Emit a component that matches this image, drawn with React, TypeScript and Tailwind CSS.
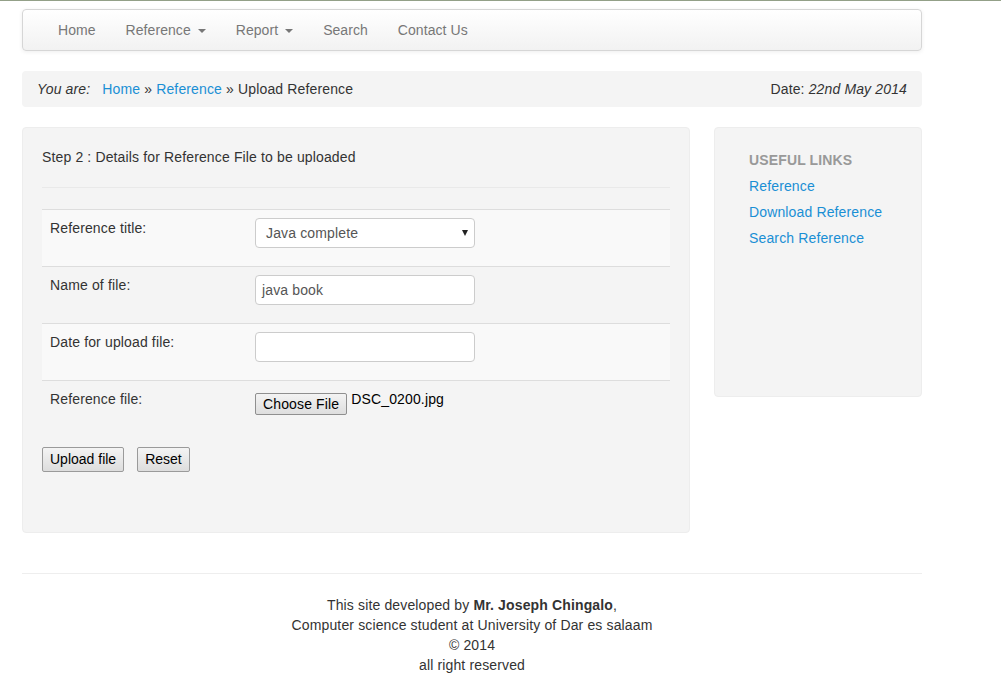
const linkBlue = "text-[#1a8fd4]";

function Caret() {
  return (
    <span className="ml-[7px] inline-block h-0 w-0 border-x-4 border-t-4 border-x-transparent border-t-[#777] align-middle" />
  );
}

function NavBar() {
  const items = [
    { label: "Home" },
    { label: "Reference", caret: true },
    { label: "Report", caret: true },
    { label: "Search" },
    { label: "Contact Us" },
  ];
  return (
    <nav className="mt-[8px] h-[42px] rounded-[4px] border border-[#d6d6d6] bg-gradient-to-b from-white to-[#f2f2f2] shadow-[0_1px_4px_rgba(0,0,0,0.07)]">
      <ul className="flex h-full items-center pl-[20px] tracking-[0.06px]">
        {items.map((it) => (
          <li key={it.label} className="px-[15px] text-[14px] text-[#777]">
            {it.label}
            {it.caret && <Caret />}
          </li>
        ))}
      </ul>
    </nav>
  );
}

function Breadcrumb() {
  return (
    <div className="mt-[20px] flex h-[36px] items-center justify-between rounded-[4px] bg-[#f4f4f4] px-[15px] text-[14px] text-[#333]">
      <div>
        <i>You are:</i>
        <span className={`ml-[12px] ${linkBlue}`}>Home</span> »{" "}
        <span className={linkBlue}>Reference</span> » Upload Reference
      </div>
      <div>
        Date: <i>22nd May 2014</i>
      </div>
    </div>
  );
}

function Row({
  label,
  striped,
  children,
}: {
  label: string;
  striped?: boolean;
  children: React.ReactNode;
}) {
  return (
    <div className={`flex h-[57px] border-t border-[#dddddd] ${striped ? "bg-[#f9f9f9]" : ""}`}>
      <div className="w-[213px] px-[8px] pt-[8px] leading-[20px]">{label}</div>
      <div className="pt-[8px]">{children}</div>
    </div>
  );
}

function TextInput({ value }: { value?: string }) {
  return (
    <div className="flex h-[30px] w-[220px] items-center rounded-[4px] border border-[#cccccc] bg-white px-[6px] text-[14px] text-[#555]">
      {value}
    </div>
  );
}

const btn =
  "h-[25px] rounded-[2px] border border-[#9a9a9a] bg-gradient-to-b from-[#f4f4f4] to-[#dddddd] px-[7px] text-[14px] tracking-normal text-black";

function UploadForm() {
  return (
    <section className="h-[406px] w-[668px] rounded-[4px] border border-[#ededed] bg-[#f4f4f4] px-[19px] pt-[19px] text-[14px] text-[#333]">
      <p className="leading-[20px]">Step 2 : Details for Reference File to be uploaded</p>
      <hr className="mt-[20px] border-t border-[#e9e9e9]" />
      <div className="mt-[21px]">
        <Row label="Reference title:" striped>
          <div className="flex h-[30px] w-[220px] items-center justify-between rounded-[4px] border border-[#cccccc] bg-white pl-[10px] pr-[6px] text-[14px] text-[#555]">
            <span>Java complete</span>
            <span className="h-0 w-0 border-x-[3.5px] border-t-[6px] border-x-transparent border-t-[#222]" />
          </div>
        </Row>
        <Row label="Name of file:">
          <TextInput value="java book" />
        </Row>
        <Row label="Date for upload file:" striped>
          <TextInput />
        </Row>
        <Row label="Reference file:">
          <div className="flex items-start">
            <span className="mt-[4px] rounded-[2px] border border-[#8f8f8f] bg-gradient-to-b from-[#f3f3f3] to-[#dedede] px-[7px] py-[1px] text-[14px] leading-[18px] text-black">
              Choose File
            </span>
            <span className="ml-[4px] leading-[20px] text-black">DSC_0200.jpg</span>
          </div>
        </Row>
      </div>
      <div className="mt-[10px] flex gap-[13px]">
        <button className={btn}>Upload file</button>
        <button className={btn}>Reset</button>
      </div>
    </section>
  );
}

function UsefulLinks() {
  return (
    <aside className="h-[270px] w-[208px] rounded-[4px] border border-[#ededed] bg-[#f4f4f4] pl-[34px] pt-[22px] text-[14px]">
      <h3 className="text-[14px] font-bold leading-[20px] text-[#999]">USEFUL LINKS</h3>
      <ul className="mt-[6px] flex flex-col gap-[6px]">
        <li className={`leading-[20px] ${linkBlue}`}>Reference</li>
        <li className={`leading-[20px] ${linkBlue}`}>Download Reference</li>
        <li className={`leading-[20px] ${linkBlue}`}>Search Reference</li>
      </ul>
    </aside>
  );
}

function Footer() {
  return (
    <footer className="mt-[40px]">
      <hr className="border-t border-[#eeeeee]" />
      <div className="mt-[21px] text-center text-[14px] leading-[20px] text-[#333]">
        <p>
          This site developed by <b>Mr. Joseph Chingalo</b>,
        </p>
        <p>Computer science student at University of Dar es salaam</p>
        <p>© 2014</p>
        <p>all right reserved</p>
      </div>
    </footer>
  );
}

export default function App() {
  return (
    <div className="min-h-[675px] border-t border-[#93a088] bg-white font-['Liberation_Sans',Arial,sans-serif] tracking-[0.14px]">
      <div className="ml-[22px] w-[900px]">
        <NavBar />
        <Breadcrumb />
        <div className="mt-[20px] flex items-start justify-between">
          <UploadForm />
          <UsefulLinks />
        </div>
        <Footer />
      </div>
    </div>
  );
}
